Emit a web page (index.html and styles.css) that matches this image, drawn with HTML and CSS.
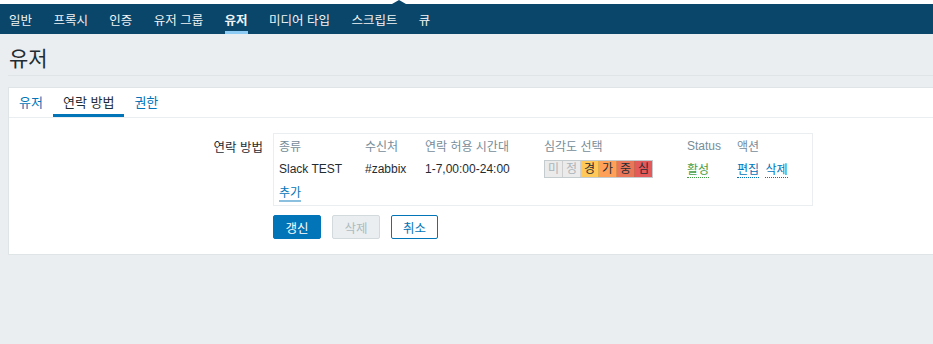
FILE: index.html
```html
<!DOCTYPE html>
<html lang="ko">

<head>
          <meta charset="UTF-8">
          <meta name="viewport" content="width=device-width, initial-scale=1.0">
          <title>유저</title>
          <link rel="stylesheet" href="styles.css">
</head>

<body>
          <div class="topnav">
                    <span class="notch"></span>
                    <a class="nav-item" href="#">일반</a>
                    <a class="nav-item" href="#">프록시</a>
                    <a class="nav-item" href="#">인증</a>
                    <a class="nav-item" href="#">유저 그룹</a>
                    <a class="nav-item active" href="#">유저</a>
                    <a class="nav-item" href="#">미디어 타입</a>
                    <a class="nav-item" href="#">스크립트</a>
                    <a class="nav-item" href="#">큐</a>
          </div>

          <div class="page-head">
                    <h1 class="title">유저</h1>
          </div>

          <div class="card">
                    <div class="tabs">
                              <a class="tab" href="#">유저</a>
                              <a class="tab active" href="#">연락 방법</a>
                              <a class="tab" href="#">권한</a>
                    </div>

                    <div class="form">
                              <div class="form-row">
                                        <label class="form-label">연락 방법</label>
                                        <div class="media-box">
                                                  <table class="media-table">
                                                            <tr class="head">
                                                                      <th class="c-type">종류</th>
                                                                      <th class="c-to">수신처</th>
                                                                      <th class="c-when">연락 허용 시간대</th>
                                                                      <th class="c-sev">심각도 선택</th>
                                                                      <th class="c-status">Status</th>
                                                                      <th>액션</th>
                                                            </tr>
                                                            <tr>
                                                                      <td>Slack TEST</td>
                                                                      <td>#zabbix</td>
                                                                      <td>1-7,00:00-24:00</td>
                                                                      <td>
                                                                                <div class="sev">
                                                                                          <span class="sev-cell na">미</span>
                                                                                          <span class="sev-cell info">정</span>
                                                                                          <span class="sev-cell warn">경</span>
                                                                                          <span class="sev-cell avg">가</span>
                                                                                          <span class="sev-cell high">중</span>
                                                                                          <span class="sev-cell dis">심</span>
                                                                                </div>
                                                                      </td>
                                                                      <td><a class="dotted green" href="#">활성</a></td>
                                                                      <td><a class="dotted" href="#">편집</a> <a class="dotted" href="#">삭제</a></td>
                                                            </tr>
                                                            <tr>
                                                                      <td colspan="6"><a class="add-link" href="#">추가</a></td>
                                                            </tr>
                                                  </table>
                                        </div>
                              </div>

                              <div class="form-row">
                                        <span></span>
                                        <div class="buttons">
                                                  <button class="btn primary">갱신</button>
                                                  <button class="btn disabled" disabled>삭제</button>
                                                  <button class="btn alt">취소</button>
                                        </div>
                              </div>
                    </div>
          </div>
</body>

</html>
```

FILE: styles.css
```css
body {
          margin: 0;
          background-color: #ebeef0;
          font-family: "Liberation Sans", "Noto Sans CJK KR", sans-serif;
          font-size: 12px;
          color: #1f2c33;
          overflow: hidden;
}

a {
          text-decoration: none;
}

.topnav {
          position: relative;
          display: flex;
          gap: 21.4px;
          height: 30px;
          padding-left: 9px;
          background-color: #0a466a;
          border-top: 4px solid #ffffff;
}

.notch {
          position: absolute;
          left: 392px;
          top: -4px;
          width: 0;
          height: 0;
          border-left: 7px solid transparent;
          border-right: 7px solid transparent;
          border-bottom: 4px solid #0a466a;
}

.nav-item {
          display: flex;
          align-items: center;
          color: #f2f4f5;
          font-size: 12.5px;
          border-bottom: 3px solid transparent;
          padding-top: 3px;
}

.nav-item.active {
          border-bottom-color: #8dcbf4;
          font-weight: bold;
}

.page-head {
          margin: 0 0 0 8px;
          height: 41px;
          border-bottom: 1px solid #dfe4e7;
}

.title {
          margin: 0;
          padding: 8px 0 0 1px;
          font-size: 21px;
          font-weight: normal;
          color: #1f2c33;
}

.card {
          margin: 11px 0 0 8px;
          height: 166px;
          background-color: #ffffff;
          border: 1px solid #dfe4e7;
          border-right: none;
}

.tabs {
          display: flex;
          height: 29px;
          border-bottom: 1px solid #ebeef0;
}

.tab {
          display: flex;
          align-items: center;
          padding: 0 10px;
          font-size: 13px;
          color: #0275b8;
          border-bottom: 3px solid transparent;
}

.tab.active {
          color: #1f2c33;
          border-bottom-color: #0275b8;
}

.form {
          padding-top: 15px;
}

.form-row {
          display: grid;
          grid-template-columns: 254px 1fr;
          column-gap: 10px;
          margin-bottom: 9px;
}

.form-label {
          text-align: right;
          padding-top: 4px;
          font-size: 12.5px;
}

.media-box {
          width: 533px;
          border: 1px solid #ebeef0;
          padding: 0 0 2px 5px;
}

.media-table {
          border-collapse: collapse;
}

.media-table th,
.media-table td {
          padding: 0;
          height: 23px;
          text-align: left;
          white-space: nowrap;
}

.media-table th {
          font-weight: normal;
          color: #768d99;
}

.c-type { width: 86px; }
.c-to { width: 60px; }
.c-when { width: 119px; }
.c-sev { width: 143px; }
.c-status { width: 50px; }

.sev {
          display: inline-flex;
          border: 1px solid #c5ccd0;
}

.sev-cell {
          width: 17px;
          height: 16px;
          line-height: 16px;
          text-align: center;
          font-size: 12px;
          border-right: 1px solid rgba(0, 0, 0, 0.12);
}

.sev-cell:last-child {
          border-right: none;
}

.na { background-color: #ebebeb; color: #acb5ba; }
.info { background-color: #ebebeb; color: #acb5ba; }
.warn { background-color: #ffc859; color: #1f2c33; }
.avg { background-color: #ffa059; color: #1f2c33; }
.high { background-color: #e97659; color: #1f2c33; }
.dis { background-color: #e45959; color: #1f2c33; }

.dotted {
          color: #0275b8;
          border-bottom: 1px dotted #0275b8;
          margin-right: 3px;
}

.dotted.green {
          color: #429e47;
          border-bottom-color: #429e47;
}

.add-link {
          color: #0275b8;
          border-bottom: 2px solid #8cc0df;
}

.buttons {
          display: flex;
          gap: 11px;
}

.btn {
          height: 24px;
          width: 48px;
          padding: 0;
          font-family: inherit;
          font-size: 12.5px;
          border-radius: 2px;
          border: 1px solid #0275b8;
          cursor: pointer;
}

.btn.primary {
          background-color: #0275b8;
          color: #ffffff;
}

.btn.disabled {
          background-color: #ebeef0;
          border-color: #d3dadd;
          color: #acbbc2;
          cursor: default;
}

.btn.alt {
          background-color: #ffffff;
          color: #0275b8;
          width: 47px;
}
```
